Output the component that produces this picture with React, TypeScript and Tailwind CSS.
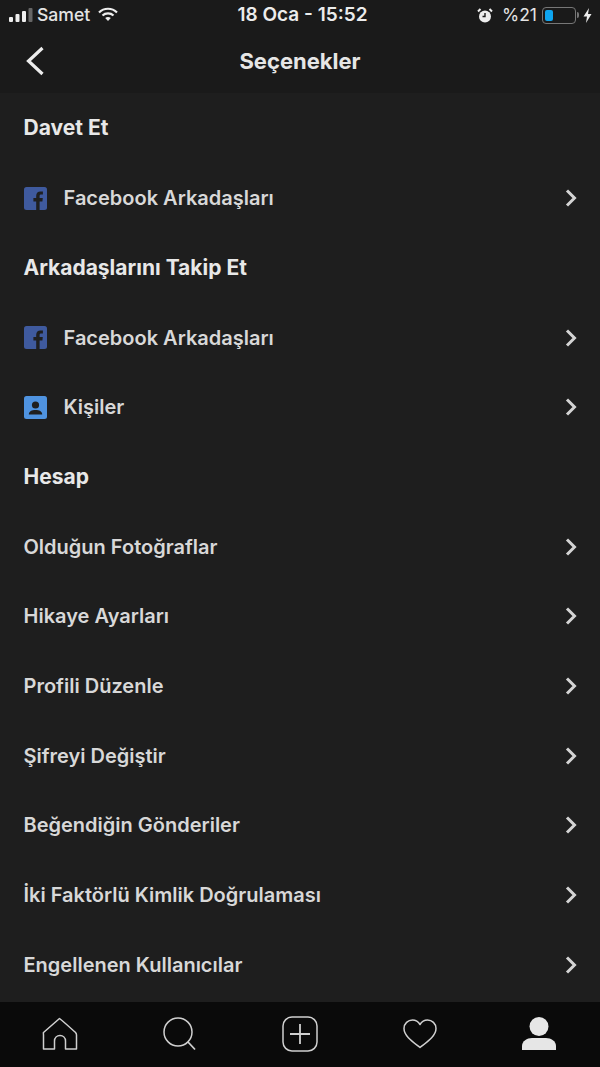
import { ReactNode } from "react";

const Chevron = () => (
  <svg width="14" height="20" viewBox="0 0 14 20" fill="none" className="text-[#d4d4d4]">
    <path d="M3 2.5 L10.5 10 L3 17.5" stroke="currentColor" strokeWidth="3" />
  </svg>
);

const FacebookIcon = () => (
  <svg width="23" height="23" viewBox="0 0 23 23">
    <rect width="23" height="23" rx="2.5" fill="#3f5a9e" />
    <path
      d="M15.6 23v-8.6h2.8l.4-3.3h-3.2V9c0-1 .3-1.6 1.6-1.6h1.7V4.5c-.3 0-1.3-.1-2.5-.1-2.5 0-4.2 1.5-4.2 4.3v2.4H9.4v3.3h2.8V23z"
      fill="#1f1f1f"
    />
  </svg>
);

const ContactsIcon = () => (
  <svg width="23" height="23" viewBox="0 0 23 23">
    <rect width="23" height="23" rx="2.5" fill="#4f93e0" />
    <circle cx="11.5" cy="9" r="3.6" fill="#1f1f1f" />
    <path d="M4.8 18.5c0-3 3-4.4 6.7-4.4s6.7 1.4 6.7 4.4z" fill="#1f1f1f" />
  </svg>
);

const Header = ({ children }: { children: string }) => (
  <div className="h-[69.7px] pl-[23.5px] pb-[1px] flex items-center text-[21px] font-bold text-[#e8e8e8]">
    {children}
  </div>
);

const Row = ({ label, icon }: { label: string; icon?: ReactNode }) => (
  <div className="h-[69.7px] pl-[23.5px] pr-[22px] flex items-center justify-between">
    <div className="flex items-center gap-[17px]">
      {icon}
      <span className="text-[20px] font-semibold text-[#d8d8d8]">{label}</span>
    </div>
    <Chevron />
  </div>
);

const StatusBar = () => (
  <div className="h-[30px] pl-[9px] pr-2 flex items-center justify-between text-[#e4e4e4] text-[18px] font-medium">
    <div className="flex items-center gap-[5px] w-[180px]">
      <svg width="24" height="14" viewBox="0 0 24 14">
        <rect x="0" y="9" width="4" height="5" rx="1" fill="#eee" />
        <rect x="6.5" y="6" width="4" height="8" rx="1" fill="#eee" />
        <rect x="13" y="3" width="4" height="11" rx="1" fill="#eee" />
        <rect x="19.5" y="0" width="4" height="14" rx="1" fill="#666" />
      </svg>
      <span className="text-[17.6px] ml-[-1px]">Samet</span>
      <svg width="20" height="15" viewBox="0 0 20 15" className="ml-[3px]" fill="none" stroke="#eee" strokeWidth="2.2">
        <path d="M1 5.5 C6 0.5 14 0.5 19 5.5" />
        <path d="M4.5 8.5 C7.5 5.6 12.5 5.6 15.5 8.5" />
        <path d="M10 14 L7.2 11 C8.8 9.6 11.2 9.6 12.8 11 Z" fill="#eee" stroke="none" />
      </svg>
    </div>
    <span className="font-semibold text-[19px] text-[#ececec] ml-[4px]">18 Oca - 15:52</span>
    <div className="flex items-center justify-end w-[180px]">
      <svg width="16" height="15" viewBox="0 0 16 15" className="mr-[9px]">
        <circle cx="8" cy="8.5" r="6" fill="#eee" />
        <path d="M8 5 V8.5 H5.5" stroke="#1a1a1a" strokeWidth="1.4" fill="none" />
        <path d="M1 3.5 L3.5 1 M15 3.5 L12.5 1" stroke="#eee" strokeWidth="2" />
      </svg>
      <span className="font-normal text-[17.5px]">%21</span>
      <div className="ml-[5px] w-[34px] h-[17px] rounded-[4px] border border-[#777] p-[2px] flex">
        <div className="w-[8px] h-full rounded-[2px] bg-[#0ea5f0]" />
      </div>
      <div className="w-[2px] h-[6px] ml-[1px] bg-[#777] rounded-r" />
      <svg width="9" height="15" viewBox="0 0 9 15" className="ml-[4px]">
        <path d="M6 0 L0.5 8.5 H4 L3 15 L8.5 6 H5 Z" fill="#eee" />
      </svg>
    </div>
  </div>
);

const TabBar = () => (
  <div className="h-[65px] bg-[#0a0a0a] flex items-center justify-between pl-[42px] pr-[44px] pb-[2px]">
    <svg width="36" height="34" viewBox="0 0 36 34" fill="none" stroke="#d0d0d0" strokeWidth="1.5" strokeLinejoin="round">
      <path d="M1.5 15.5 L17.5 1.5 C22 5 28 10.5 33.5 15.5 C34 16 34.5 17 34.5 18 V32 H23.5 V24 C23.5 20.5 21 18.5 18 18.5 C15 18.5 12.5 20.5 12.5 24 V32 H1.5 V18 C1.5 17 1.2 16 1.5 15.5 Z" />
    </svg>
    <svg width="34" height="34" viewBox="0 0 34 34" fill="none" stroke="#d0d0d0" strokeWidth="1.5">
      <circle cx="15" cy="15" r="14" />
      <path d="M25 25 L32 32.5" strokeWidth="1.8" />
    </svg>
    <svg width="36" height="36" viewBox="0 0 36 36" fill="none" stroke="#d0d0d0" strokeWidth="1.5">
      <rect x="1" y="1" width="34" height="34" rx="9" />
      <path d="M18 8 V28 M8 18 H28" strokeWidth="1.8" />
    </svg>
    <svg width="34" height="30" viewBox="0 0 34 30" fill="none" stroke="#d0d0d0" strokeWidth="1.5" strokeLinejoin="round">
      <path d="M17 28.5 C10 23 1 17 1 9.5 C1 4.5 5 1 9.5 1 C13 1 15.5 3 17 5.5 C18.5 3 21 1 24.5 1 C29 1 33 4.5 33 9.5 C33 17 24 23 17 28.5 Z" />
    </svg>
    <svg width="34" height="33" viewBox="0 0 34 33" fill="#e6e6e6">
      <circle cx="17" cy="9.5" r="9.5" />
      <path d="M0 33 V29 C0 24 5 21 10 21 H24 C29 21 34 24 34 29 V33 Z" />
    </svg>
  </div>
);

export default function App() {
  return (
    <div className="w-[600px] h-[1067px] overflow-hidden flex flex-col bg-[#1e1e1e] font-['Inter',sans-serif]">
      <div className="h-[93px] bg-[#1a1a1a] shrink-0">
        <StatusBar />
        <div className="relative h-[63px] flex items-center justify-center">
          <svg width="20" height="30" viewBox="0 0 20 30" fill="none" className="absolute left-[26px] top-[16px]">
            <path d="M16.5 2 L2.5 15 L16.5 28" stroke="#ececec" strokeWidth="3.2" />
          </svg>
          <span className="text-[22px] font-bold text-[#e6e6e6] mb-[1px]">Seçenekler</span>
        </div>
      </div>
      <div className="flex-1 overflow-hidden pt-[0.7px]">
        <Header>Davet Et</Header>
        <Row label="Facebook Arkadaşları" icon={<FacebookIcon />} />
        <Header>Arkadaşlarını Takip Et</Header>
        <Row label="Facebook Arkadaşları" icon={<FacebookIcon />} />
        <Row label="Kişiler" icon={<ContactsIcon />} />
        <Header>Hesap</Header>
        <Row label="Olduğun Fotoğraflar" />
        <Row label="Hikaye Ayarları" />
        <Row label="Profili Düzenle" />
        <Row label="Şifreyi Değiştir" />
        <Row label="Beğendiğin Gönderiler" />
        <Row label="İki Faktörlü Kimlik Doğrulaması" />
        <Row label="Engellenen Kullanıcılar" />
      </div>
      <TabBar />
    </div>
  );
}
